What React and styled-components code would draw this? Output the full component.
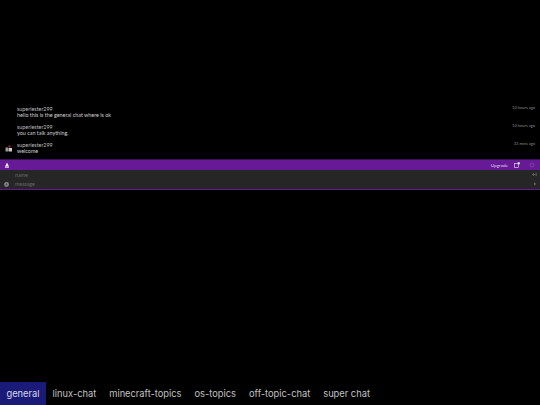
import React from "react";
import styled, { createGlobalStyle } from "styled-components";

const Global = createGlobalStyle`
  html, body { margin: 0; padding: 0; background: #000; }
  #root { height: 405px; }
`;
const Page = styled.div`
  width: 540px; height: 405px; background: #000; display: flex; flex-direction: column;
  overflow: hidden; font-family: Lato, "Liberation Sans", sans-serif;
`;
const ChatBox = styled.section`
  height: 190px; display: flex; flex-direction: column; justify-content: flex-end; flex: none;
`;
const Messages = styled.div`
  display: flex; flex-direction: column; gap: 4px; padding: 0 5px 4px 0;
`;
const Message = styled.div`
  display: grid; grid-template-columns: 17px 1fr auto; color: #d0d0d0; height: 14px; font-size: 5.4px;
  line-height: 6.6px;
`;
const Avatar = styled.div`
  display: flex; align-items: center; justify-content: flex-start; padding-left: 5px;
`;
const Body = styled.div`display: flex; flex-direction: column; padding-top: 0.8px;`;
const Name = styled.span`color: #bcbcbc;`;
const Time = styled.span`color: #8c8c8c; font-size: 4px; line-height: 6px;`;
const Bar = styled.div`
  height: 11px; background: #661a95; border-top: 1px solid #3a0f5a; box-sizing: border-box; display: flex; align-items: center;
  padding: 0 5px 0 4px; color: #e2d2ee; font-size: 4.6px;
`;
const Upgrade = styled.span`margin-left: auto; margin-right: 6px;`;
const BarIcon = styled.svg`width: 6px; height: 6px; flex: none;`;
const Gap = styled.span`width: 9px; flex: none;`;
const Form = styled.div`
  height: 19px; background: #262626; display: grid;
  grid-template-rows: 1fr 1fr; padding: 0 3px 0 4px; color: #686868; font-size: 5.3px;
`;
const BottomLine = styled.div`height: 1px; flex: none; background: #661a95;`;
const Field = styled.div`display: flex; align-items: center;`;
const FieldSlot = styled.span`width: 11px; flex: none; display: flex;`;
const Push = styled.span`margin-left: auto; display: flex;`;
const Spacer = styled.div`flex: 1;`;
const Tabs = styled.nav`
  height: 23px; display: flex; flex: none; font-family: Inter, sans-serif; font-size: 9.3px;
`;
const Tab = styled.div`
  padding: 0 6.5px; display: flex; align-items: center; white-space: nowrap;
  color: ${p => (p.$active ? "#d8d8e8" : "#c0c0c0")};
  background: ${p => (p.$active ? "#1a1a78" : "transparent")};
`;

const tabs = ["general", "linux-chat", "minecraft-topics", "os-topics", "off-topic-chat", "super chat"];

export default function App() {
  return (
    <Page>
      <Global />
      <ChatBox>
        <Messages>
          <Message>
            <span />
            <Body><Name>superiester299</Name><span>hello this is the general chat where is ok</span></Body>
            <Time>10 hours ago</Time>
          </Message>
          <Message>
            <span />
            <Body><Name>superiester299</Name><span>you can talk anything.</span></Body>
            <Time>10 hours ago</Time>
          </Message>
          <Message>
            <Avatar>
              <svg width="8" height="7" viewBox="0 0 8 7">
                <rect x="0.5" y="2.5" width="2.5" height="4" fill="#999" />
                <rect x="3.5" y="0.5" width="2" height="2" fill="#a03030" />
                <rect x="3.5" y="3" width="3.5" height="3.5" fill="#ccc" />
              </svg>
            </Avatar>
            <Body><Name>superiester299</Name><span>welcome</span></Body>
            <Time>33 mins ago</Time>
          </Message>
        </Messages>
        <Bar>
          <BarIcon viewBox="0 0 6 6"><path d="M3 .6 5 4.6H1z" fill="#eee" /><rect x="1" y="4.7" width="4" height="1" fill="#eee" /></BarIcon>
          <Upgrade>Upgrade</Upgrade>
          <BarIcon viewBox="0 0 6 6"><rect x=".6" y="1.4" width="4" height="4" fill="none" stroke="#d8c8e8" strokeWidth=".7" /><rect x="3.6" y=".3" width="2.2" height="2" fill="#eee" /></BarIcon>
          <Gap />
          <BarIcon viewBox="0 0 6 6"><circle cx="3" cy="3" r="2" fill="none" stroke="#8a5aaa" strokeWidth=".6" /></BarIcon>
        </Bar>
        <Form>
          <Field>
            <FieldSlot />
            name
            <Push><svg width="5" height="5" viewBox="0 0 5 5"><path d="M.5 2.5h3M2 1 .5 2.5 2 4M4.2 .8v3.4" fill="none" stroke="#777" strokeWidth=".7" /></svg></Push>
          </Field>
          <Field>
            <FieldSlot><svg width="5" height="5" viewBox="0 0 5 5"><circle cx="2.5" cy="2.5" r="2.4" fill="#888" /><circle cx="2.5" cy="2.5" r=".9" fill="#444" /></svg></FieldSlot>
            message
            <Push><svg width="4" height="4" viewBox="0 0 4 4"><path d="M1 .5 3.5 2 1 3.5z" fill="#666" /></svg></Push>
          </Field>
        </Form>
        <BottomLine />
      </ChatBox>
      <Spacer />
      <Tabs>
        {tabs.map((t, i) => <Tab key={t} $active={i === 0}>{t}</Tab>)}
      </Tabs>
    </Page>
  );
}
